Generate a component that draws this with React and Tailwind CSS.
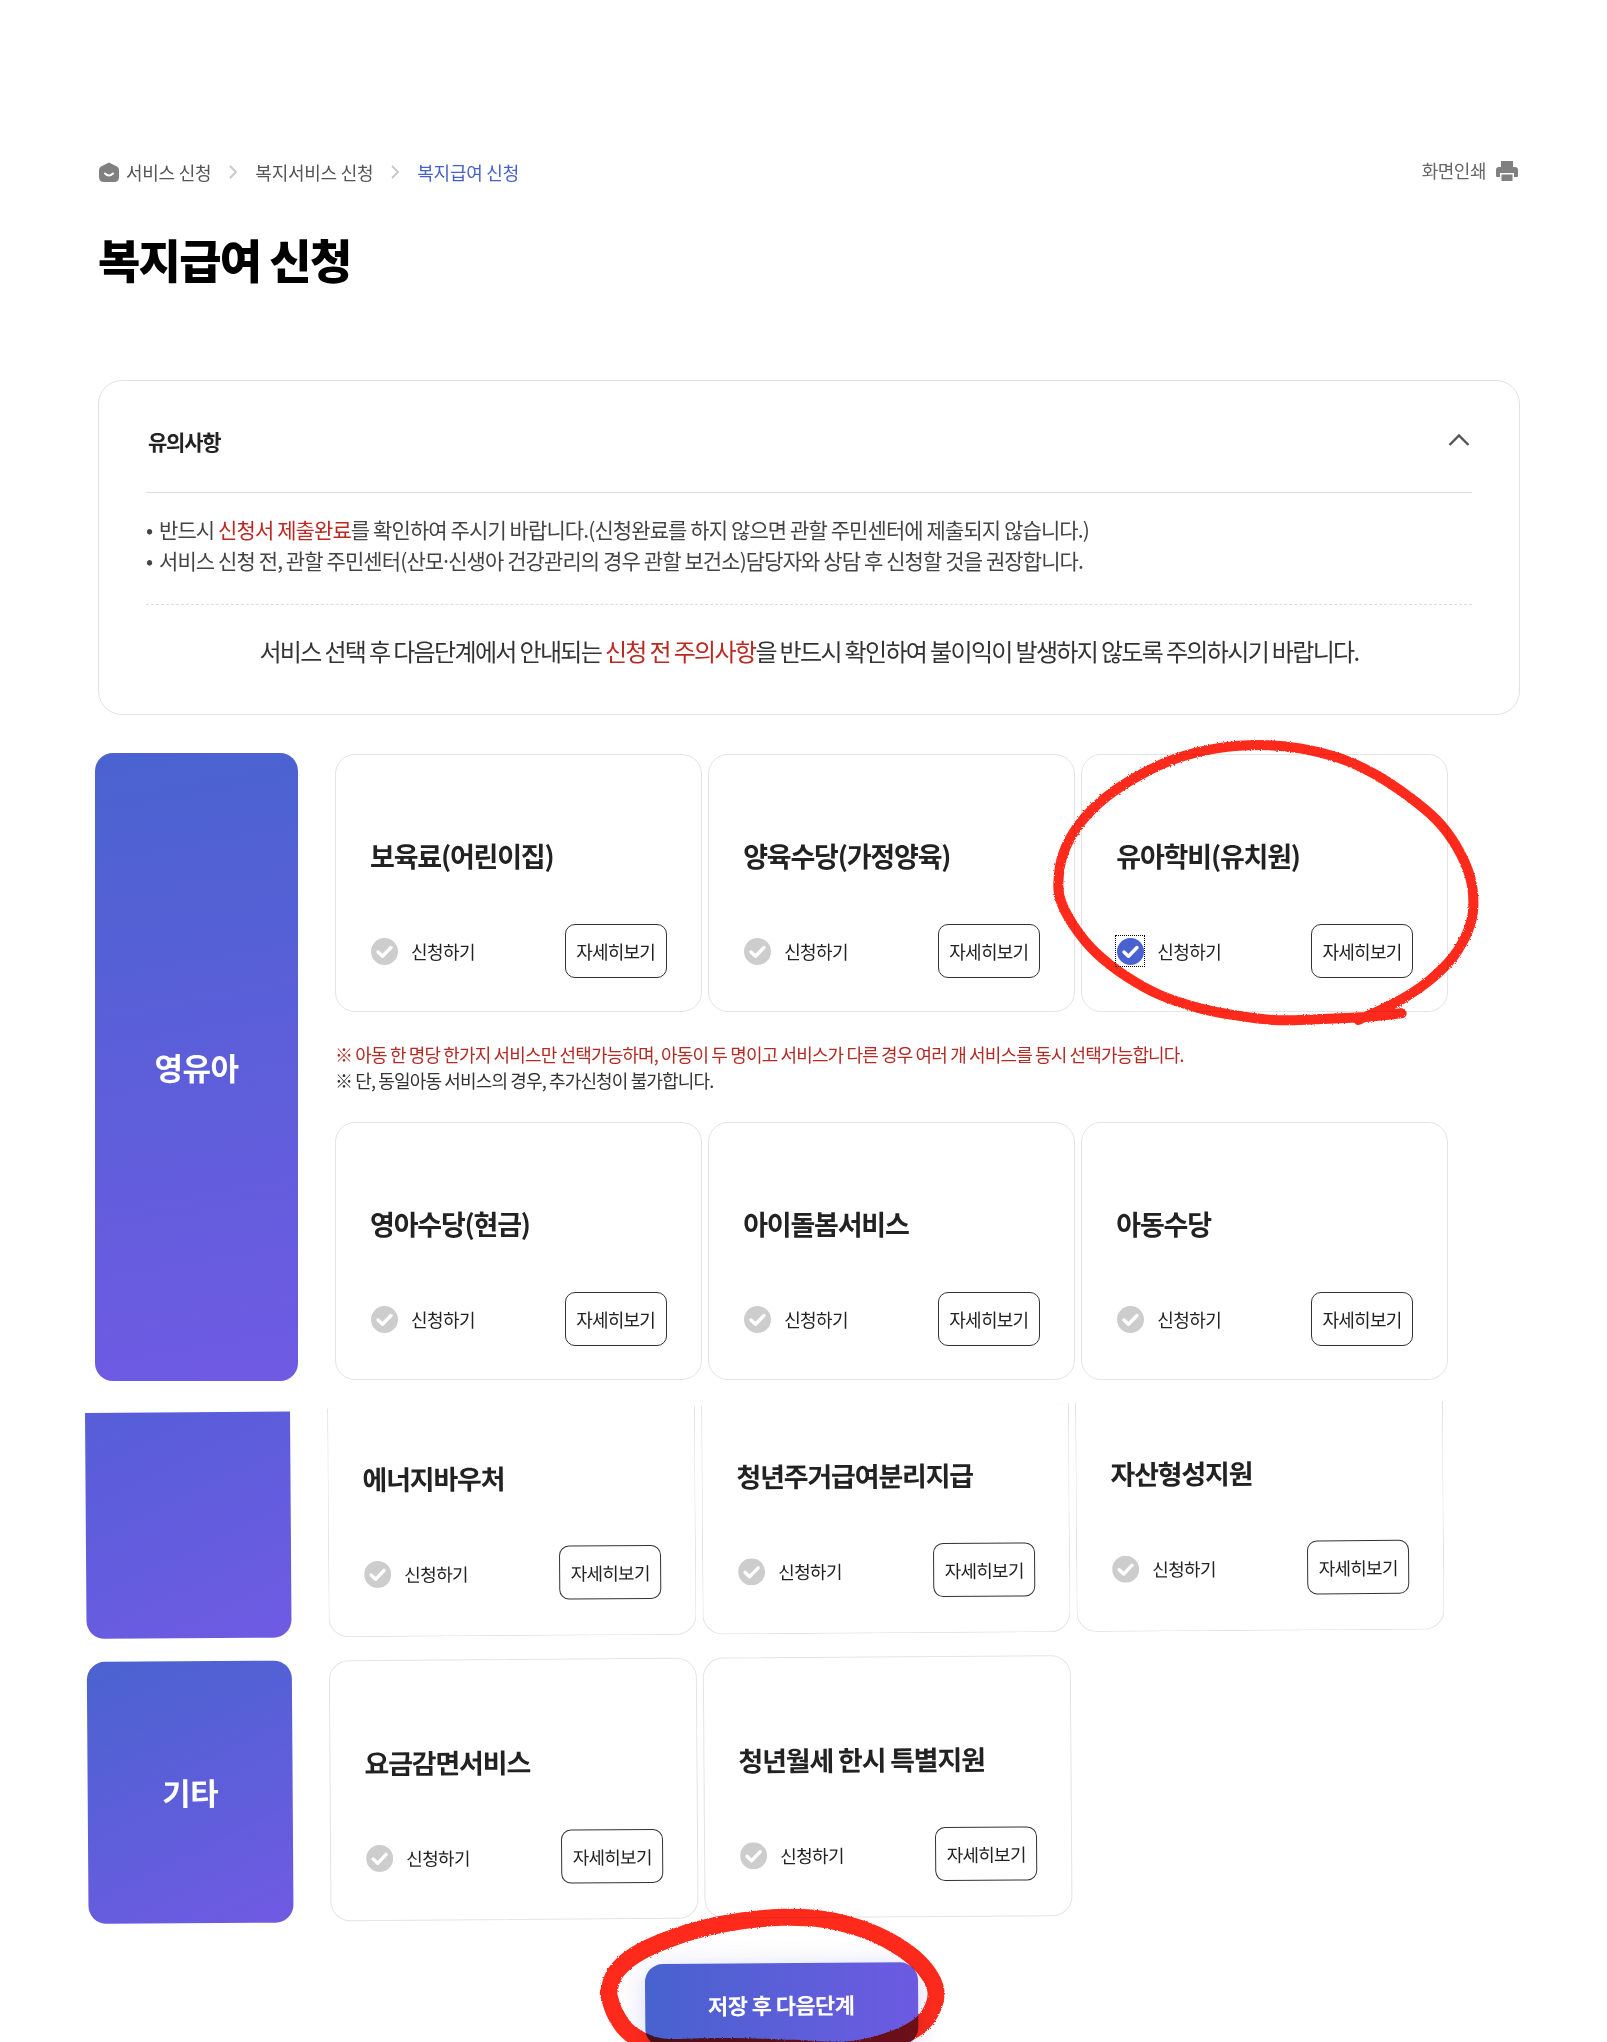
const topCards = [
  { title: '보육료(어린이집)' },
  { title: '양육수당(가정양육)' },
  { title: '유아학비(유치원)', checked: true },
];
const midCards = [{ title: '영아수당(현금)' }, { title: '아이돌봄서비스' }, { title: '아동수당' }];
const energyCards = [{ title: '에너지바우처' }, { title: '청년주거급여분리지급' }, { title: '자산형성지원' }];
const etcCards = [{ title: '요금감면서비스' }, { title: '청년월세 한시 특별지원' }];

// hand drawn marks, points read off the picture (crop x, crop y at 3x)
const cardRing = [
  [1205, 880], [1080, 892], [950, 898], [820, 900], [700, 885], [600, 865], [480, 825], [380, 770], [290, 700],
  [230, 630], [185, 550], [175, 490], [190, 400], [240, 310], [320, 230], [420, 165], [530, 115], [650, 85],
  [780, 75], [900, 85], [1020, 115], [1120, 160], [1220, 225], [1310, 300], [1370, 380], [1410, 470], [1420, 560],
  [1405, 630], [1360, 710], [1290, 780], [1210, 835], [1130, 875], [1075, 900],
].map(([x, y]) => [1000 + x / 3, 720 + y / 3]);
const buttonRing = [
  [145, 400], [165, 340], [225, 285], [320, 240], [430, 205], [550, 182], [670, 172], [790, 178], [900, 205],
  [1000, 250], [1080, 310], [1125, 380], [1120, 440], [1075, 500], [980, 545], [860, 570], [700, 565], [560, 560],
  [420, 560], [300, 560], [210, 520], [165, 460], [145, 400],
].map(([x, y]) => [560 + x / 3, 1860 + y / 3]);

function smoothPath(pts) {
  let d = `M${pts[0][0]} ${pts[0][1]}`;
  for (let i = 0; i < pts.length - 1; i++) {
    const p0 = pts[i - 1] || pts[i];
    const p1 = pts[i];
    const p2 = pts[i + 1];
    const p3 = pts[i + 2] || p2;
    d += `C${p1[0] + (p2[0] - p0[0]) / 6} ${p1[1] + (p2[1] - p0[1]) / 6} ${p2[0] - (p3[0] - p1[0]) / 6} ${p2[1] - (p3[1] - p1[1]) / 6} ${p2[0]} ${p2[1]}`;
  }
  return d;
}

function CheckMark({ checked }) {
  return (
    <span className={`flex h-[30px] w-[28px] shrink-0 items-center justify-center ${checked ? 'outline-1 outline-dotted outline-black' : ''}`}>
      <svg width="27" height="27" viewBox="0 0 27 27">
        <circle cx="13.5" cy="13.5" r="13.5" fill={checked ? '#4a62d0' : '#cdcdcd'} />
        <path d="M7 14l4.500 4.300 8.500-8.800" fill="none" stroke="#fff" strokeWidth="3.4" strokeLinecap="round" strokeLinejoin="round" />
      </svg>
    </span>
  );
}

function ServiceCard({ title, checked, cut, height, pb = 'pb-[33px]' }) {
  return (
    <div className={`flex flex-col justify-end border border-[#e4e4e4] bg-white pl-[34px] pr-[34px] ${pb} ${height} ${cut ? 'rounded-b-[20px] border-t-0' : 'rounded-[20px]'}`}>
      <h3 className="mb-[48px] h-[40px] text-[27px] font-bold leading-[40px] tracking-[-1.2px] text-[#222]">{title}</h3>
      <div className="flex items-center justify-between">
        <label className="flex items-center gap-[13px] text-[18px] tracking-[-0.6px] text-[#222]">
          <CheckMark checked={checked} />
          신청하기
        </label>
        <button className="h-[54px] w-[102px] rounded-[10px] border border-[#333] bg-white text-[18px] tracking-[-0.75px] text-[#222]">자세히보기</button>
      </div>
    </div>
  );
}

function Chevron() {
  return (
    <svg width="10" height="16" viewBox="0 0 10 16" className="mx-[17px]">
      <path d="M2 2l6 6-6 6" fill="none" stroke="#c9c9c9" strokeWidth="2" />
    </svg>
  );
}

export default function App() {
  return (
    <div className="relative h-[2042px] w-[1607px] overflow-hidden bg-white pl-[98px] pt-[160px] [font-family:'Noto_Sans_CJK_KR','Noto_Sans',sans-serif]">
      <div className="flex h-[24px] w-[1422px] items-center justify-between">
        <nav className="flex items-center text-[18px] tracking-[-0.25px] text-[#555]">
          <svg width="20" height="20" viewBox="0 0 20 20" className="ml-[1px] mr-[7px]">
            <path d="M10 0.5L18 4.5Q20 5.5 20 8V15Q20 20 15 20H5Q0 20 0 15V8Q0 5.5 2 4.5Z" fill="#808080" />
            <path d="M6 11.5Q10 15.5 14 11.5" fill="none" stroke="#fff" strokeWidth="2" strokeLinecap="round" />
          </svg>
          <span>서비스 신청</span>
          <Chevron />
          <span>복지서비스 신청</span>
          <Chevron />
          <span className="text-[#4560c8]">복지급여 신청</span>
        </nav>
        <div className="mb-[3px] mr-[2px] flex items-center gap-[10px] text-[18px] tracking-[-0.5px] text-[#666]">
          화면인쇄
          <svg width="22" height="20" viewBox="0 0 22 20">
            <path d="M5 0h12v6H5zM3 6h16q3 0 3 3v6q0 1-1 1h-3v-4H4v4H1q-1 0-1-1V9q0-3 3-3zM5.500 13.500h11V20h-11z" fill="#808080" />
          </svg>
        </div>
      </div>

      <h1 className="mt-[44px] h-[62px] text-[46px] font-black leading-[60px] tracking-[-1.7px] text-black">복지급여 신청</h1>

      <section className="mt-[90px] h-[335px] w-[1422px] rounded-[24px] border border-[#e2e2e2] px-[47px] pt-[40px]">
        <div className="flex h-[72px] items-start justify-between border-b border-[#dedede] px-[2px] pb-[31px]">
          <h2 className="h-[40px] text-[21px] font-bold leading-[40px] tracking-[-1.2px] text-[#222]">유의사항</h2>
          <svg width="22" height="14" viewBox="0 0 22 14" className="mt-[12px]">
            <path d="M1.500 12L11 2.500 20.500 12" fill="none" stroke="#555" strokeWidth="2.4" />
          </svg>
        </div>
        <ul className="mt-[21px] text-[21px] leading-[31px] tracking-[-0.9px] text-[#444]">
          <li className="flex">
            <span className="w-[13px]">•</span>
            <span>
              반드시 <span className="text-[#bb2a22]">신청서 제출완료</span>를 확인하여 주시기 바랍니다.(신청완료를 하지 않으면 관할 주민센터에 제출되지 않습니다.)
            </span>
          </li>
          <li className="flex">
            <span className="w-[13px]">•</span>
            <span>
              서비스 신청 전, 관할 주민센터(산모<span className="-mx-[3px]">·</span>신생아 건강관리의 경우 관할 보건소)담당자와 상담 후 신청할 것을 권장합니다.
            </span>
          </li>
        </ul>
        <div className="mt-[28px] border-t border-dashed border-[#dedede]" />
        <p className="mt-[28px] text-center text-[24px] leading-[36px] tracking-[-1.65px] text-[#333]">
          서비스 선택 후 다음단계에서 안내되는 <span className="text-[#bb2a22]">신청 전 주의사항</span>을 반드시 확인하여 불이익이 발생하지 않도록 주의하시기 바랍니다.
        </p>
      </section>

      <section className="-ml-[3px] mt-[38px] flex gap-[37px]">
        <div className="flex h-[628px] w-[203px] items-center justify-center rounded-[18px] bg-linear-[170deg] from-[#4a63d0] to-[#6f5ae3] text-[31px] font-bold tracking-[-0.6px] text-white">영유아</div>
        <div className="w-[1113px] pt-[1px]">
          <div className="grid grid-cols-3 gap-[6.5px]">
            {topCards.map((c) => (
              <ServiceCard key={c.title} {...c} height="h-[258px]" />
            ))}
          </div>
          <div className="mt-[29px] h-[81px] text-[18px] leading-[26px] tracking-[-0.86px]">
            <p className="text-[#b22c26]">※ 아동 한 명당 한가지 서비스만 선택가능하며, 아동이 두 명이고 서비스가 다른 경우 여러 개 서비스를 동시 선택가능합니다.</p>
            <p className="text-[#333]">※ 단, 동일아동 서비스의 경우, 추가신청이 불가합니다.</p>
          </div>
          <div className="grid grid-cols-3 gap-[6.5px]">
            {midCards.map((c) => (
              <ServiceCard key={c.title} {...c} height="h-[258px]" />
            ))}
          </div>
        </div>
      </section>

      <section className="-ml-[13px] mt-[29px] w-[1386px] origin-top-left -rotate-[0.4deg]">
        <div className="flex items-end gap-[37px]">
          <div className="h-[226px] w-[205px] rounded-b-[18px] bg-linear-[155deg] from-[#565ed8] to-[#6f5be3]" />
          <div className="grid w-[1116px] grid-cols-3 gap-[6px]">
            {energyCards.map((c) => (
              <ServiceCard key={c.title} {...c} cut height="h-[229px]" pb="pb-[35px]" />
            ))}
          </div>
        </div>
        <div className="mt-[23px] flex gap-[37px]">
          <div className="flex h-[262px] w-[205px] items-center justify-center rounded-[18px] bg-linear-[155deg] from-[#4a63d0] to-[#705ae3] text-[31px] font-bold tracking-[-0.6px] text-white">기타</div>
          <div className="grid w-[1116px] grid-cols-3 gap-[6px]">
            {etcCards.map((c) => (
              <ServiceCard key={c.title} {...c} height="h-[261px]" pb="pb-[35px]" />
            ))}
          </div>
        </div>
        <div className="mt-[44px] flex justify-center">
          <button className="mr-[2px] h-[83px] w-[273px] rounded-[18px] bg-linear-to-r from-[#4762cf] to-[#6c5ae1] text-[22px] font-bold tracking-[-0.6px] text-white shadow-[0_4px_24px_rgba(90,90,220,0.25)]">저장 후 다음단계</button>
        </div>
      </section>

      <svg viewBox="0 0 1607 2042" className="pointer-events-none absolute left-0 top-0 h-[2042px] w-[1607px] mix-blend-multiply">
        <defs>
          <filter id="rough" x="-5%" y="-5%" width="110%" height="110%">
            <feTurbulence type="fractalNoise" baseFrequency="0.7" numOctaves="1" />
            <feDisplacementMap in="SourceGraphic" scale="3" />
          </filter>
        </defs>
        <g fill="none" stroke="#ff2a1a" strokeLinecap="round" strokeLinejoin="round" filter="url(#rough)">
          <path d={smoothPath(cardRing)} strokeWidth="10" />
          <path d={smoothPath(buttonRing)} strokeWidth="17" />
        </g>
      </svg>
    </div>
  );
}
